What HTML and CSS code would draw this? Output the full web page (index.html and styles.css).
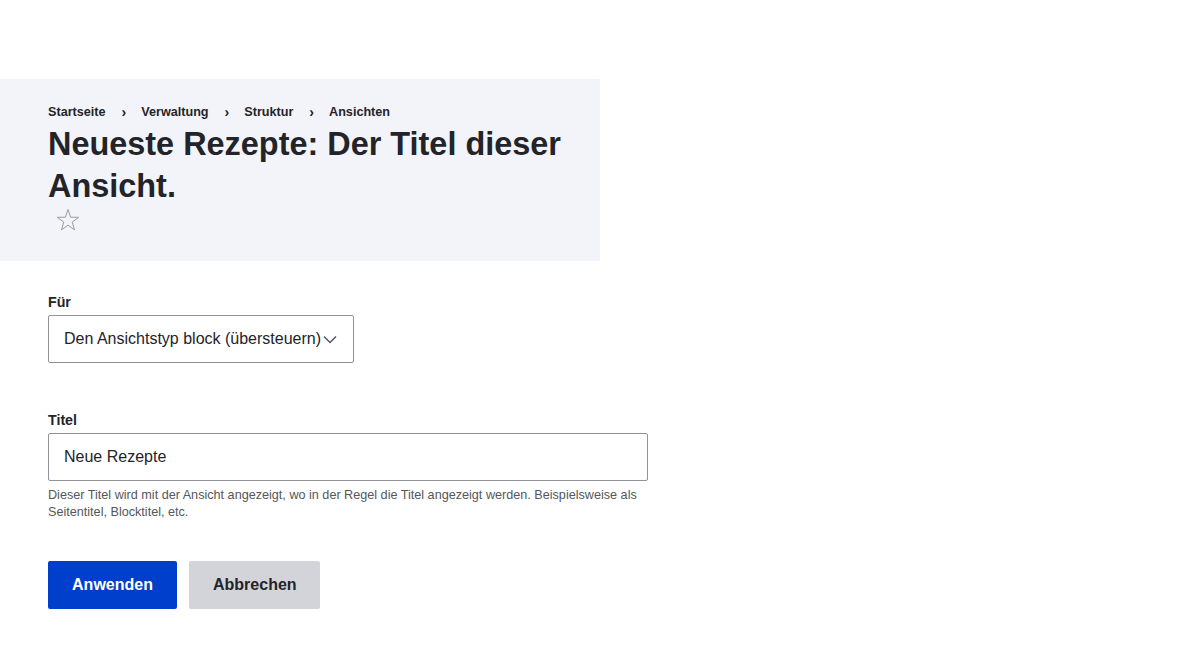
FILE: index.html
```html
<!DOCTYPE html>
<html lang="de">
<head>
<meta charset="utf-8">
<title>Neueste Rezepte</title>
<link rel="stylesheet" href="styles.css">
</head>
<body>
<div class="top"></div>
<header class="region-header">
  <nav class="breadcrumb">
    <a>Startseite</a><span class="sep">›</span>
    <a>Verwaltung</a><span class="sep">›</span>
    <a>Struktur</a><span class="sep">›</span>
    <a>Ansichten</a>
  </nav>
  <h1 class="page-title">Neueste Rezepte: Der Titel dieser Ansicht.</h1>
  <div class="shortcut">
    <svg width="26" height="26" viewBox="0 0 26 26"><path d="M13 2.5 L15.6 10.2 L23.7 10.3 L17.2 15.1 L19.6 22.9 L13 18.2 L6.4 22.9 L8.8 15.1 L2.3 10.3 L10.4 10.2 Z" fill="none" stroke="#9a9ca3" stroke-width="1"/></svg>
  </div>
</header>
<main class="content">
  <div class="field">
    <label class="label">Für</label>
    <div class="select">
      <span>Den Ansichtstyp block (übersteuern)</span>
      <svg class="chev" width="14" height="9" viewBox="0 0 14 9"><path d="M1 1.5 L7 7.5 L13 1.5" fill="none" stroke="#545560" stroke-width="1.5"/></svg>
    </div>
  </div>
  <div class="field field-title">
    <label class="label">Titel</label>
    <div class="input">Neue Rezepte</div>
    <div class="desc">Dieser Titel wird mit der Ansicht angezeigt, wo in der Regel die Titel angezeigt werden. Beispielsweise als Seitentitel, Blocktitel, etc.</div>
  </div>
  <div class="actions">
    <button class="btn btn-primary">Anwenden</button>
    <button class="btn btn-secondary">Abbrechen</button>
  </div>
</main>
</body>
</html>
```
FILE: styles.css
```css
html, body { margin: 0; padding: 0; }
body {
  font-family: "Liberation Sans", Arial, sans-serif;
  color: #232429;
  background: #fff;
}
.top { height: 79px; }
.region-header {
  width: 600px;
  box-sizing: border-box;
  background: #f3f4f9;
  padding: 25px 24px 26px 48px;
  height: 182px;
}
.breadcrumb {
  font-size: 12.64px;
  font-weight: bold;
  line-height: 17px;
  display: flex;
  align-items: center;
}
.breadcrumb a { color: #232429; }
.breadcrumb .sep { margin: 0 15px 0 16px; font-size: 14px; }
.page-title {
  margin: 2px 0 0;
  font-size: 32.43px;
  line-height: 42px;
  font-weight: bold;
}
.shortcut { margin: 0 0 0 7px; height: 30px; }
.content { padding: 32px 48px 110px; }
.label {
  display: block;
  font-size: 14.22px;
  font-weight: bold;
  line-height: 18px;
  margin-bottom: 4px;
}
.select {
  width: 306px;
  height: 48px;
  box-sizing: border-box;
  border: 1px solid #919297;
  border-radius: 2px;
  display: flex;
  align-items: center;
  padding: 0 15px;
  font-size: 16px;
  position: relative;
}
.chev { position: absolute; right: 16px; top: 19px; }
.field-title { margin-top: 48px; }
.input {
  width: 600px;
  height: 48px;
  box-sizing: border-box;
  border: 1px solid #919297;
  border-radius: 2px;
  display: flex;
  align-items: center;
  padding: 0 15px;
  font-size: 16px;
}
.desc {
  margin-top: 6px;
  font-size: 12.64px;
  line-height: 17px;
  color: #55565b;
  width: 600px;
}
.actions { margin-top: 40px; display: flex; gap: 12px; }
.btn {
  height: 48px;
  border: 0;
  border-radius: 2px;
  font-family: "Liberation Sans", Arial, sans-serif;
  font-size: 16px;
  font-weight: bold;
  padding: 0 24px;
}
.btn-primary { background: #003ecc; color: #fff; width: 129px; }
.btn-secondary { background: #d3d4d9; color: #232429; width: 131px; }
```
